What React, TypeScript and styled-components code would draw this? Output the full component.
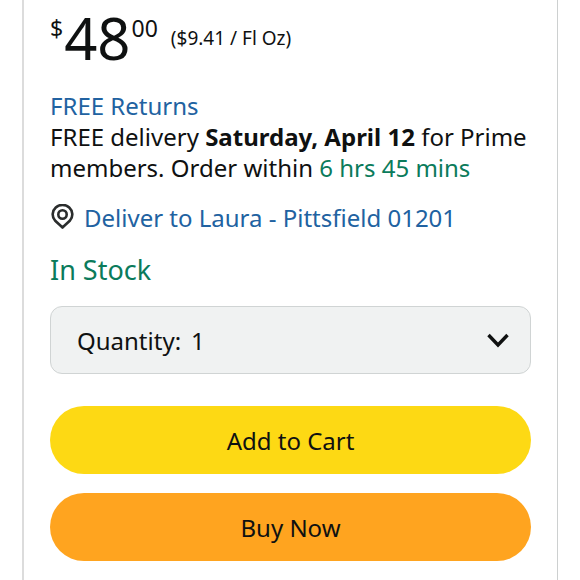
import React from 'react';
import styled, { createGlobalStyle } from 'styled-components';

const GlobalStyle = createGlobalStyle`
  * { box-sizing: border-box; }
  body {
    margin: 0;
    background: #fff;
    color: #0f1111;
    font-family: "Noto Sans", "Open Sans", sans-serif;
    font-size: 24px;
    line-height: 31px;
  }
`;

const BuyBox = styled.main`
  min-height: 100vh;
  margin: 0 22px;
  padding: 8px 26px 19px;
  border-left: 2px solid #dcdcdc;
  border-right: 1px solid #cdd0d0;
`;

const PriceRow = styled.div`
  display: flex;
  align-items: center;
  gap: 13px;
  height: 60px;
`;

const Price = styled.div`
  display: flex;
  align-items: flex-start;
  gap: 1px;
  line-height: 60px;
`;

const PriceWhole = styled.span`
  font-size: 58px;
`;

const PriceSmall = styled.span`
  font-size: 23px;
  line-height: 40px;
`;

const UnitPrice = styled.span`
  font-size: 19px;
`;

const Delivery = styled.p`
  margin: 22px 0 0;
`;

const Link = styled.a`
  color: #2162a1;
  text-decoration: none;
`;

const Green = styled.span`
  color: #0b7b5b;
`;

const Location = styled(Link)`
  display: flex;
  align-items: center;
  gap: 10px;
  margin-top: 19px;
`;

const Stock = styled.p`
  margin: 20px 0;
  font-size: 27px;
  line-height: 33px;
  color: #0b7b5b;
`;

const QuantityField = styled.label`
  display: flex;
  align-items: center;
  height: 68px;
  padding: 0 20px 0 26px;
  border: 1px solid #d0d4d4;
  border-radius: 12px;
  background: #f0f2f2;
`;

const QuantitySelect = styled.select`
  flex: 1;
  height: 100%;
  padding: 0 0 0 10px;
  border: 0;
  background: transparent;
  appearance: none;
  color: inherit;
  font: inherit;
`;

const Button = styled.button<{ $color: string }>`
  display: block;
  width: 100%;
  height: 68px;
  border: 0;
  border-radius: 34px;
  background: ${({ $color }) => $color};
  color: #0f1111;
  font: inherit;
`;

const Actions = styled.div`
  display: grid;
  gap: 19px;
  margin-top: 32px;
`;

export default function App() {
  return (
    <>
      <GlobalStyle />
      <BuyBox>
        <PriceRow>
          <Price>
            <PriceSmall>$</PriceSmall>
            <PriceWhole>48</PriceWhole>
            <PriceSmall>00</PriceSmall>
          </Price>
          <UnitPrice>($9.41 / Fl Oz)</UnitPrice>
        </PriceRow>
        <Delivery>
          <Link href="#returns">FREE Returns</Link>
          <br />
          FREE delivery <b>Saturday, April 12</b> for Prime members. Order within <Green>6 hrs 45 mins</Green>
        </Delivery>
        <Location href="#location">
          <svg width="24" height="28" viewBox="0 0 24 28" fill="none" stroke="#2b2d2d" aria-hidden="true">
            <path d="M12.5 23.500C10 21 7.500 19 5 16.500A9.800 9.500 0 1 1 20 16.500C17.500 19 15 21 12.500 23.500Z" strokeWidth="2.600" strokeLinejoin="round" />
            <circle cx="12.500" cy="10.500" r="4.200" strokeWidth="2.600" />
          </svg>
          Deliver to Laura - Pittsfield 01201
        </Location>
        <Stock>In Stock</Stock>
        <QuantityField>
          Quantity:
          <QuantitySelect defaultValue="1">
            <option>1</option>
            <option>2</option>
            <option>3</option>
          </QuantitySelect>
          <svg width="24" height="16" viewBox="0 0 24 16" fill="none" stroke="#0f1111" strokeWidth="3.400" aria-hidden="true">
            <path d="M2.500 3l9.500 10 9.500-10" />
          </svg>
        </QuantityField>
        <Actions>
          <Button type="button" $color="#fdd914">Add to Cart</Button>
          <Button type="button" $color="#ffa41f">Buy Now</Button>
        </Actions>
      </BuyBox>
    </>
  );
}
